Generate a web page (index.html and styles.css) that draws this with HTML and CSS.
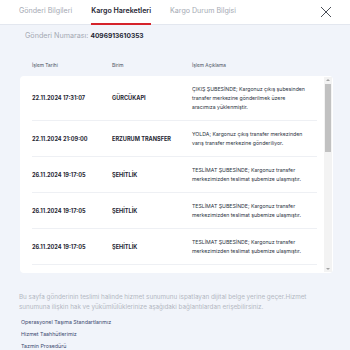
FILE: index.html
```html
<!DOCTYPE html>
<html lang="tr">
<head>
  <meta charset="UTF-8" />
  <meta name="viewport" content="width=device-width, initial-scale=1.0" />
  <title>Kargo Hareketleri</title>
  <link rel="stylesheet" href="styles.css">
</head>
<body>

  <nav class="tabs">
    <a class="tab" href="#">Gönderi Bilgileri</a>
    <a class="tab active" href="#">Kargo Hareketleri</a>
    <a class="tab" href="#">Kargo Durum Bilgisi</a>
    <button class="close" aria-label="Kapat">
      <svg width="12" height="12" viewBox="0 0 12 12"><path d="M1 1L11 11M11 1L1 11" stroke="#4a4e57" stroke-width="1" fill="none"/></svg>
    </button>
  </nav>

  <section class="content">
    <div class="shipment">Gönderi Numarası: <strong>4096913610353</strong></div>

    <div class="moves">
      <div class="moves-head">
        <span>İşlem Tarihi</span>
        <span>Birim</span>
        <span>İşlem Açıklama</span>
      </div>
      <div class="moves-card">
        <div class="moves-body">
          <div class="row">
            <div class="date">22.11.2024 17:31:07</div>
            <div class="unit">GÜRCÜKAPI</div>
            <div class="desc">ÇIKIŞ ŞUBESİNDE; Kargonuz çıkış şubesinden transfer merkezine gönderilmek üzere aracımıza yüklenmiştir.</div>
          </div>
          <div class="row">
            <div class="date">22.11.2024 21:09:00</div>
            <div class="unit">ERZURUM TRANSFER</div>
            <div class="desc">YOLDA; Kargonuz çıkış transfer merkezinden varış transfer merkezine gönderiliyor.</div>
          </div>
          <div class="row">
            <div class="date">26.11.2024 19:17:05</div>
            <div class="unit">ŞEHİTLİK</div>
            <div class="desc">TESLİMAT ŞUBESİNDE; Kargonuz transfer merkezimizden teslimat şubemize ulaşmıştır.</div>
          </div>
          <div class="row">
            <div class="date">26.11.2024 19:17:05</div>
            <div class="unit">ŞEHİTLİK</div>
            <div class="desc">TESLİMAT ŞUBESİNDE; Kargonuz transfer merkezimizden teslimat şubemize ulaşmıştır.</div>
          </div>
          <div class="row">
            <div class="date">26.11.2024 19:17:05</div>
            <div class="unit">ŞEHİTLİK</div>
            <div class="desc">TESLİMAT ŞUBESİNDE; Kargonuz transfer merkezimizden teslimat şubemize ulaşmıştır.</div>
          </div>
        </div>
        <div class="scrollbar">
          <span class="arrow up"></span>
          <span class="track"><span class="thumb"></span></span>
          <span class="arrow down"></span>
        </div>
      </div>
    </div>

    <p class="note">Bu sayfa gönderinin teslimi halinde hizmet sunumunu ispatlayan dijital belge yerine geçer.Hizmet sunumuna ilişkin hak ve yükümlülüklerinize aşağıdaki bağlantılardan erişebilirsiniz.</p>

    <ul class="links">
      <li><a href="#">Operasyonel Taşıma Standartlarımız</a></li>
      <li><a href="#">Hizmet Taahhütlerimiz</a></li>
      <li><a href="#">Tazmin Prosedürü</a></li>
    </ul>
  </section>

</body>
</html>
```

FILE: styles.css
```css
body {
  font-family: 'Inter', 'Noto Sans', sans-serif;
  margin: 0;
  background-color: #f1f4fa;
  color: #1f2633;
}

.tabs {
  display: flex;
  align-items: center;
  height: 25px;
  padding: 0 18px 0 19px;
  background-color: #ffffff;
  border-bottom: 1px solid #e3e7ef;
  box-sizing: border-box;
}
.tab {
  position: relative;
  height: 25px;
  line-height: 21px;
  margin-right: 19px;
  font-size: 7.1px;
  color: #a4a9b3;
  text-decoration: none;
}
.tab.active {
  color: #1f2633;
  font-weight: 600;
}
.tab.active::after {
  content: "";
  position: absolute;
  left: 0;
  right: 0;
  bottom: 0;
  height: 2px;
  background-color: #d5232b;
}
.close {
  margin-left: auto;
  padding: 0;
  border: 0;
  background: none;
  display: flex;
}

.content {
  padding: 0 17px 0 20px;
}
.shipment {
  padding: 6px 0 0 5px;
  font-size: 7.2px;
  color: #a4a9b3;
}
.shipment strong {
  font-size: 6.6px;
  color: #1f2633;
  font-weight: 700;
}

.moves {
  margin-top: 22px;
}
.moves-head {
  display: grid;
  grid-template-columns: 80px 80px 1fr;
  padding: 0 12px 8px;
  font-size: 4.8px;
  color: #4b5261;
}
.moves-card {
  display: flex;
  height: 197px;
  background-color: #ffffff;
  border-radius: 4px;
  overflow: hidden;
}
.moves-body {
  flex: 1;
  overflow: hidden;
  padding: 0 7px 0 12px;
}

.scrollbar {
  display: flex;
  flex-direction: column;
  align-items: center;
  width: 8px;
  margin: 1px 1px 1px 0;
  background-color: #f3f3f3;
}
.arrow {
  width: 0;
  height: 0;
  margin: 2px 0;
  border-left: 2px solid transparent;
  border-right: 2px solid transparent;
}
.arrow.up {
  border-bottom: 2px solid #a3a3a3;
}
.arrow.down {
  border-top: 2px solid #a3a3a3;
}
.track {
  flex: 1;
  width: 100%;
  padding: 1px;
  box-sizing: border-box;
}
.thumb {
  display: block;
  height: 68px;
  background-color: #c1c1c1;
}

.row {
  display: grid;
  grid-template-columns: 80px 80px 1fr;
  align-items: center;
  padding: 8.5px 0;
  border-bottom: 1px solid #eef0f4;
}
.date,
.unit {
  font-size: 5.6px;
  font-weight: 700;
  color: #1f2633;
}
.desc {
  max-width: 118px;
  font-size: 5.2px;
  line-height: 9px;
  color: #2c3342;
}

.note {
  margin: 19px 0 0 -1px;
  font-size: 6.3px;
  line-height: 10px;
  color: #b3b8c2;
}
.links {
  list-style: none;
  margin: 4px 0 0 1px;
  padding: 0;
}
.links li {
  font-size: 5.3px;
  line-height: 12px;
}
.links a {
  color: #3d4a70;
  text-decoration: none;
}
```
